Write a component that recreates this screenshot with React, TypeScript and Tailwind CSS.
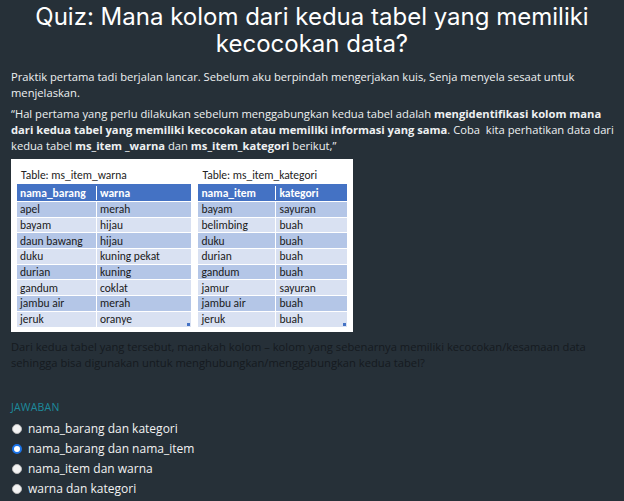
import React from 'react';

const warna = [
  ['apel', 'merah'],
  ['bayam', 'hijau'],
  ['daun bawang', 'hijau'],
  ['duku', 'kuning pekat'],
  ['durian', 'kuning'],
  ['gandum', 'coklat'],
  ['jambu air', 'merah'],
  ['jeruk', 'oranye'],
];

const kategori = [
  ['bayam', 'sayuran'],
  ['belimbing', 'buah'],
  ['duku', 'buah'],
  ['durian', 'buah'],
  ['gandum', 'buah'],
  ['jamur', 'sayuran'],
  ['jambu air', 'buah'],
  ['jeruk', 'buah'],
];

const options = [
  'nama_barang dan kategori',
  'nama_barang dan nama_item',
  'nama_item dan warna',
  'warna dan kategori',
];

function Sheet({ title, head, rows, split }: { title: string; head: string[]; rows: string[][]; split: string }) {
  return (
    <div className="flex flex-col">
      <div className="h-[25px] pl-[4px] pt-[9px] text-[11.5px] leading-[14px] text-[#222]">{title}</div>
      <div className="relative">
        <div className={`grid ${split} bg-[#4472c4] text-white font-bold h-[17px] items-center`}>
          <span className="pl-[3px] border-r border-white">{head[0]}</span>
          <span className="pl-[3px]">{head[1]}</span>
        </div>
        {rows.map((r, i) => (
          <div
            key={i}
            className={`grid ${split} h-[15.7px] items-center border-t border-white ${i % 2 === 0 ? 'bg-[#b4c6e7]' : 'bg-[#d9e1f2]'}`}
          >
            <span className="pl-[3px] border-r border-white h-full flex items-center">{r[0]}</span>
            <span className="pl-[3px]">{r[1]}</span>
          </div>
        ))}
        <span className="absolute right-[1px] bottom-[1px] w-[3px] h-[3px] bg-[#4472c4]" />
      </div>
    </div>
  );
}

export default function App() {
  return (
    <div className="w-[624px] h-[501px] bg-[#263038] overflow-hidden font-['Open_Sans',sans-serif] text-[#eef0f2]">
      <h1 className="pt-[3px] px-[20px] text-center text-[24px] leading-[27px] font-normal text-white font-['Inter',sans-serif]">
        Quiz: Mana kolom dari kedua tabel yang memiliki kecocokan data?
      </h1>
      <div className="px-[11px] pt-[12px] text-[11.2px] leading-[16px]">
        <p className="pr-[20px]">
          Praktik pertama tadi berjalan lancar. Sebelum aku berpindah mengerjakan kuis, Senja menyela sesaat untuk menjelaskan.
        </p>
        <p className="mt-[5px] -mr-[2px]">
          “Hal pertama yang perlu dilakukan sebelum menggabungkan kedua tabel adalah{' '}
          <b>mengidentifikasi kolom mana dari kedua tabel yang memiliki kecocokan atau memiliki informasi yang sama</b>. Coba&nbsp; kita perhatikan data dari kedua tabel <b>ms_item _warna</b> dan <b>ms_item_kategori</b> berikut,”
        </p>
        <div className="mt-[5px] w-[342px] h-[173px] bg-white flex gap-[7px] px-[6px] font-['Carlito','Liberation_Sans',sans-serif] text-[11.5px] leading-[14px] text-[#1a1a1a]">
          <div className="w-[175px]">
            <Sheet title="Table: ms_item_warna" head={['nama_barang', 'warna']} rows={warna} split="grid-cols-[80px_1fr]" />
          </div>
          <div className="w-[149px]">
            <Sheet title="Table: ms_item_kategori" head={['nama_item', 'kategori']} rows={kategori} split="grid-cols-[78px_1fr]" />
          </div>
        </div>
        <p className="mt-[7px] pr-[4px] text-[#151a1f]">
          Dari kedua tabel yang tersebut, manakah kolom – kolom yang sebenarnya memiliki kecocokan/kesamaan data sehingga bisa digunakan untuk menghubungkan/menggabungkan kedua tabel?
        </p>
        <div className="mt-[28px] text-[10.5px] text-[#1d8a9c] tracking-[0.2px]">JAWABAN</div>
        <div className="mt-[6px] flex flex-col gap-[4px]">
          {options.map((o, i) => (
            <label key={o} className="flex items-center h-[16px] text-[12px] text-[#f2f2f2]">
              {i === 1 ? (
                <span className="w-[10px] h-[10px] rounded-full border-[2px] border-[#1a73e8] bg-white ml-[1px]" />
              ) : (
                <span className="w-[10px] h-[10px] rounded-full bg-[#f4f4f4] border border-[#bbb] ml-[1px]" />
              )}
              <span className="ml-[6px]">{o}</span>
            </label>
          ))}
        </div>
      </div>
    </div>
  );
}
